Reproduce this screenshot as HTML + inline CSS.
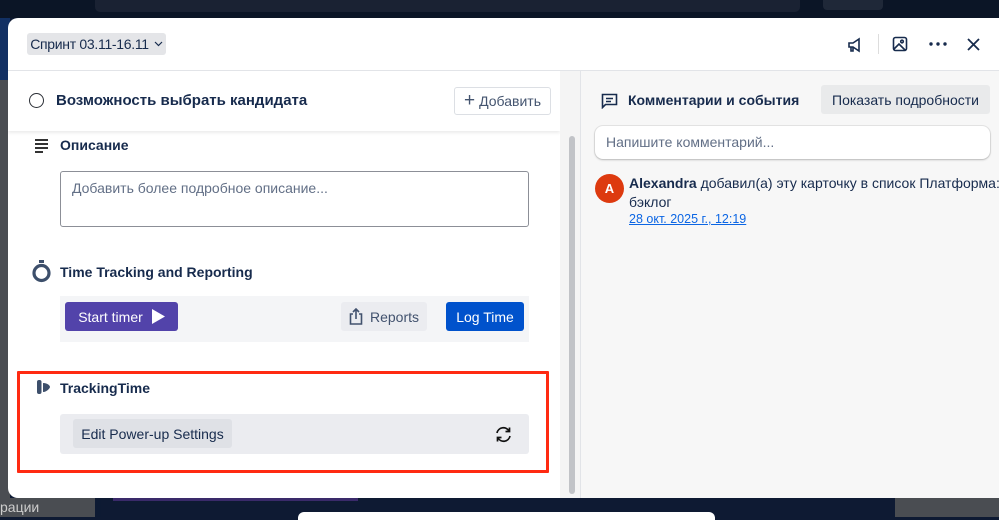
<!DOCTYPE html>
<html><head><meta charset="utf-8"><style>
*{box-sizing:border-box;margin:0;padding:0}
body{width:999px;height:517px;overflow:hidden;position:relative;background:#0e1a33;font-family:"Liberation Sans","Noto Sans CJK SC",sans-serif;color:#172b4d}
.abs{position:absolute}
.modal{left:8px;top:18px;width:1000px;height:480px;background:#fff;border-radius:10px 0 0 10px;overflow:hidden}
.btn{position:absolute;border-radius:3px;font-size:14px;display:flex;align-items:center;justify-content:center;white-space:nowrap}
</style></head><body>
<div class="abs" style="left:0;top:0;width:999px;height:18px;background:#0b1526"></div>
<div class="abs" style="left:95px;top:0;width:705px;height:12px;background:#1a2233;border-radius:0 0 5px 5px"></div>
<div class="abs" style="left:823px;top:0;width:60px;height:10px;background:#1f2838;border-radius:0 0 4px 4px"></div>
<div class="abs" style="left:0;top:18px;width:10px;height:62px;background:#123063"></div>
<div class="abs" style="left:0;top:80px;width:10px;height:437px;background:#4a4d52"></div>
<div class="abs" style="left:0;top:498px;width:95px;height:19px;background:#4a4d52;color:#ccc;font-size:14px;line-height:19px">рации</div>
<div class="abs" style="left:95px;top:498px;width:6px;height:19px;background:#0d1a33"></div>
<div class="abs" style="left:113px;top:498px;width:245px;height:3px;background:#3a2a6a"></div>
<div class="abs" style="left:895px;top:498px;width:104px;height:19px;background:#4a4d52"></div>
<div class="abs" style="left:298px;top:512px;width:417px;height:8px;background:#fff;border-radius:6px 6px 0 0"></div>

<div class="abs modal">
 <div class="abs" style="left:0;top:52px;width:1000px;height:1px;background:#e2e4e8"></div>
 <div class="btn" style="left:19px;top:15px;width:139px;height:22px;background:#e4e5e8;font-size:14px;letter-spacing:-0.3px;color:#172b4d">Спринт 03.11-16.11 <svg style="margin-left:5px" width="9" height="6"><path d="M1 1l3.5 3.5L8 1" fill="none" stroke="#172b4d" stroke-width="1.2"/></svg></div>
 <svg class="abs" style="left:838px;top:18px" width="18" height="18" viewBox="0 0 18 18" fill="none" stroke="#172b4d" stroke-width="1.6"><path d="M3 7h4l6-4v12l-6-4H3z M5 11v4h2v-4"/></svg>
 <div class="abs" style="left:870px;top:16px;width:1px;height:20px;background:#ddd"></div>
 <svg class="abs" style="left:884px;top:18px" width="16" height="16" viewBox="0 0 16 16" fill="none" stroke="#172b4d" stroke-width="1.6"><rect x="1.5" y="1.5" width="13" height="13" rx="2"/><path d="M2 13l5-5 6 6"/><circle cx="10" cy="5.5" r="1.3"/></svg>
 <svg class="abs" style="left:921px;top:24px" width="18" height="4"><circle cx="2" cy="2" r="1.7" fill="#172b4d"/><circle cx="9" cy="2" r="1.7" fill="#172b4d"/><circle cx="16" cy="2" r="1.7" fill="#172b4d"/></svg>
 <svg class="abs" style="left:959px;top:20px" width="13" height="13" viewBox="0 0 13 13" stroke="#172b4d" stroke-width="1.8"><path d="M1 1l11 11M12 1L1 12"/></svg>

 <div class="abs" style="left:0;top:53px;width:552px;height:60px;background:#fff;box-shadow:0 2px 3px rgba(0,0,0,.08)"></div>
 <div class="abs" style="left:21px;top:75px;width:15px;height:15px;border:1.6px solid #2b2f36;border-radius:50%"></div>
 <div class="abs" style="left:48px;top:74px;font-size:15px;font-weight:bold;color:#172b4d">Возможность выбрать кандидата</div>
 <div class="btn" style="left:446px;top:69px;width:97px;height:28px;border:1px solid #dcdfe4;color:#44546f"><span style="font-size:19px;margin-right:4px;font-weight:300">+</span>Добавить</div>
 <div class="abs" style="left:552px;top:53px;width:20px;height:430px;background:#f4f4f4"></div>
 <div class="abs" style="left:561px;top:118px;width:6px;height:358px;background:#c1c3c7;border-radius:3px"></div>
 <div class="abs" style="left:572px;top:53px;width:1px;height:430px;background:#e2e4e8"></div>
 <div class="abs" style="left:27px;top:121px;width:13px">
  <div style="height:2px;background:#333;margin-bottom:2px"></div><div style="height:2px;background:#333;margin-bottom:2px"></div><div style="height:2px;background:#333;margin-bottom:2px"></div><div style="height:2px;width:8px;background:#333"></div></div>
 <div class="abs" style="left:52px;top:119px;font-size:14px;font-weight:bold">Описание</div>
 <div class="abs" style="left:52px;top:153px;width:469px;height:56px;border:1px solid #8c8f97;border-radius:3px;padding:8px 11px;font-size:14px;color:#626f86">Добавить более подробное описание...</div>

 <svg class="abs" style="left:23px;top:242px" width="21" height="23" viewBox="0 0 21 23"><rect x="8" y="0" width="5" height="3" fill="#3d4f6b"/><circle cx="10.5" cy="13" r="7.5" fill="none" stroke="#3d4f6b" stroke-width="3.2"/></svg>
 <div class="abs" style="left:52px;top:246px;font-size:14px;font-weight:bold">Time Tracking and Reporting</div>
 <div class="abs" style="left:52px;top:278px;width:469px;height:46px;background:#f4f5f7"></div>
 <div class="btn" style="left:57px;top:284px;width:113px;height:29px;background:#5243aa;color:#fff;font-size:14px">Start timer <svg style="margin-left:9px" width="13" height="15"><path d="M0 0l13 7.5L0 15z" fill="#fff"/></svg></div>
 <div class="btn" style="left:333px;top:284px;width:86px;height:29px;background:#ebecf0;color:#42526e">
  <svg style="margin-right:7px" width="14" height="17" viewBox="0 0 14 17" fill="none" stroke="#42526e" stroke-width="1.6"><path d="M4 6H1.5v10h11V6H10M7 11V1M4 4l3-3 3 3"/></svg>Reports</div>
 <div class="btn" style="left:438px;top:284px;width:78px;height:29px;background:#0052cc;color:#fff">Log Time</div>

 <svg class="abs" style="left:29px;top:362px" width="14" height="14" viewBox="0 0 14 14"><rect x="0" y="0" width="4.5" height="14" rx="2" fill="#3d4f6b"/><path d="M6 3c5 0 7 3 7 4s-3 5-7 5z" fill="#3d4f6b"/></svg>
 <div class="abs" style="left:52px;top:362px;font-size:14px;font-weight:bold">TrackingTime</div>
 <div class="abs" style="left:52px;top:396px;width:469px;height:40px;background:#ebecf0;border-radius:3px"></div>
 <div class="btn" style="left:65px;top:401px;width:159px;height:29px;background:#dfe1e6;color:#172b4d">Edit Power-up Settings</div>
 <svg class="abs" style="left:487px;top:408px" width="17" height="17" viewBox="0 0 17 17" fill="none" stroke="#111" stroke-width="1.7"><path d="M2 7a6.5 6.5 0 0 1 12-2M15 10a6.5 6.5 0 0 1-12 2"/><path d="M14.5 1.5v4h-4M2.5 15.5v-4h4"/></svg>
 <div class="abs" style="left:9px;top:353px;width:532px;height:102px;border:3px solid #ff2a12;border-radius:1px"></div>

 <div class="abs" style="left:573px;top:53px;width:427px;height:430px;background:#f7f7f7"></div>
 <svg class="abs" style="left:593px;top:75px" width="17" height="16" viewBox="0 0 17 16" fill="none" stroke="#172b4d" stroke-width="1.6"><path d="M1.5 1.5h14v10h-11l-3 3z M5 5.5h7M5 8.5h5"/></svg>
 <div class="abs" style="left:620px;top:74px;font-size:14px;font-weight:bold">Комментарии и события</div>
 <div class="btn" style="left:813px;top:67px;width:169px;height:29px;background:#e9eaeb;color:#172b4d">Показать подробности</div>
 <div class="abs" style="left:587px;top:108px;width:395px;height:33px;background:#fff;border-radius:8px;box-shadow:0 1px 2px rgba(0,0,0,.2),0 0 0 1px #e6e6e6;padding:8px 11px;font-size:14px;color:#626f86">Напишите комментарий...</div>
 <div class="abs" style="left:587px;top:156px;width:29px;height:29px;border-radius:50%;background:#dd3a0f;color:#fff;font-size:13px;font-weight:bold;text-align:center;line-height:29px">A</div>
 <div class="abs" style="left:621px;top:156px;width:380px;font-size:14px;line-height:19px;color:#172b4d"><b>Alexandra</b> добавил(а) эту карточку в список Платформа: бэклог</div>
 <div class="abs" style="left:621px;top:194px;font-size:12.5px;color:#0c66e4;text-decoration:underline">28 окт. 2025 г., 12:19</div>
</div>
</body></html>
